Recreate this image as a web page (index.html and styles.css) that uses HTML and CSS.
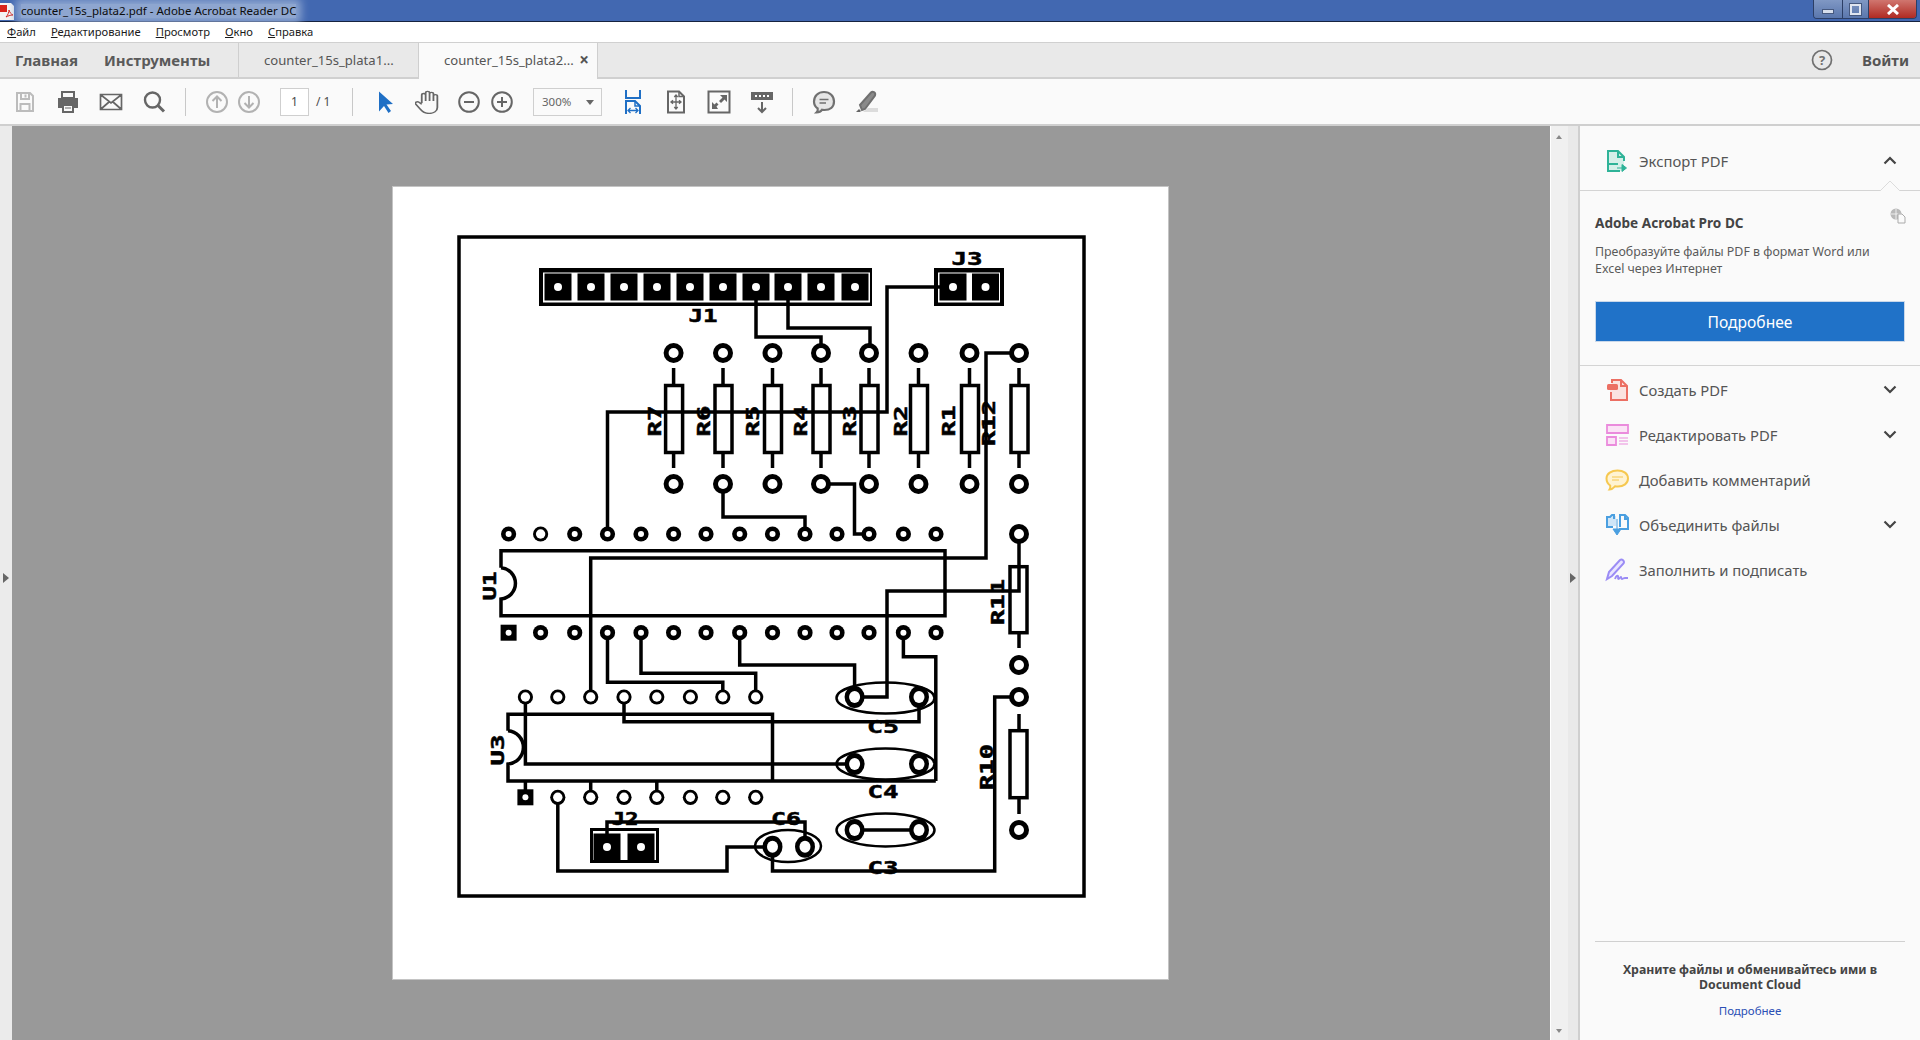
FILE: index.html
```html
<!DOCTYPE html>
<html lang="ru">
<head>
    <meta charset="UTF-8">
    <title>counter_15s_plata2.pdf - Adobe Acrobat Reader DC</title>
    <link rel="stylesheet" href="styles.css">
</head>
<body>

    <!-- заголовок окна -->
    <div class="titlebar">
        <svg class="app-icon" width="16" height="18" viewBox="0 0 16 18"><path d="M0 1h11l3 3v14H0z" fill="#f4f4f4"/><path d="M0 3h7v7H0z" fill="#d9241c"/><path d="M6 15c2-2 3-5 3-7 1 3 2 4 4 5-3 0-5 1-7 2z" fill="none" stroke="#d9241c"/></svg>
        <span class="title-text">counter_15s_plata2.pdf - Adobe Acrobat Reader DC</span>
        <div class="win-buttons">
            <div class="win-btn win-min"><span></span></div>
            <div class="win-btn win-max"><span></span></div>
            <div class="win-btn win-close">
                <svg width="14" height="11" viewBox="0 0 14 11"><path d="M2 1l10 9M12 1L2 10" stroke="#fff" stroke-width="3"/></svg>
            </div>
        </div>
    </div>

    <!-- меню -->
    <div class="menubar">
        <span><u>Ф</u>айл</span>
        <span><u>Р</u>едактирование</span>
        <span><u>П</u>росмотр</span>
        <span><u>О</u>кно</span>
        <span><u>С</u>правка</span>
    </div>

    <!-- вкладки -->
    <div class="tabbar">
        <div class="nav-tab tab-home">Главная</div>
        <div class="nav-tab tab-tools">Инструменты</div>
        <div class="doc-tab">counter_15s_plata1...</div>
        <div class="doc-tab active">counter_15s_plata2...<span class="tab-x">×</span></div>
        <div class="tab-right">
            <svg class="help-icon" width="22" height="22" viewBox="0 0 22 22"><circle cx="11" cy="11" r="9.5" fill="none" stroke="#707070" stroke-width="1.7"/><text x="11" y="15.5" class="help-q">?</text></svg>
            <span class="signin">Войти</span>
        </div>
    </div>

    <!-- панель инструментов -->
    <div class="toolbar">
        <div class="tool-group g-file">
            <svg class="tool" viewBox="0 0 24 24"><path d="M4 3h13l3 3v15H4z M8 3v6h8V3 M12.500 4.500v3 M7.500 21v-7h9v7" fill="none" stroke="#bcbcbc" stroke-width="2"/></svg>
            <svg class="tool" viewBox="0 0 24 24"><path d="M6 2h12v6H6z" fill="none" stroke="#666" stroke-width="2"/><path d="M2 8h20v10h-4v-4H6v4H2z" fill="#666"/><path d="M7 15h10v7H7z" fill="none" stroke="#666" stroke-width="2"/><path d="M9 18h6" stroke="#666"/></svg>
            <svg class="tool" viewBox="0 0 24 24"><path d="M1.500 4.500h21v15h-21z M2 5l10 8 10-8 M2 19l8-7 M22 19l-8-7" fill="none" stroke="#666" stroke-width="1.700"/></svg>
            <svg class="tool" viewBox="0 0 24 24"><circle cx="10.500" cy="10" r="7.500" fill="none" stroke="#666" stroke-width="2.400"/><path d="M16 15.500l6 6" stroke="#666" stroke-width="3"/></svg>
        </div>
        <div class="tool-sep sep-a"></div>
        <div class="tool-group g-nav">
            <svg class="tool" viewBox="0 0 24 24"><circle cx="12" cy="12" r="10" fill="none" stroke="#b2b2b2" stroke-width="2"/><path d="M12 18V7M7.500 11L12 6.500l4.500 4.500" fill="none" stroke="#b2b2b2" stroke-width="2"/></svg>
            <svg class="tool" viewBox="0 0 24 24"><circle cx="12" cy="12" r="10" fill="none" stroke="#b2b2b2" stroke-width="2"/><path d="M12 6v11M7.500 13l4.500 4.500 4.500-4.500" fill="none" stroke="#b2b2b2" stroke-width="2"/></svg>
        </div>
        <div class="page-box">1</div>
        <span class="page-total">/ 1</span>
        <div class="tool-sep sep-b"></div>
        <div class="tool-group g-select">
            <svg class="tool" viewBox="0 0 24 24"><path d="M6 1.500v20l5-5.500 4.500 7 2.500-2-4.500-6.500 6.500-.5z" fill="#1f6fc5"/></svg>
            <svg class="tool" viewBox="3 1 16 22" preserveAspectRatio="none"><path d="M7.500 13V5.500a1.300 1.300 0 0 1 2.600 0V11V3.500a1.300 1.300 0 0 1 2.600 0V11V4.500a1.300 1.300 0 0 1 2.600 0V11V6.500a1.300 1.300 0 0 1 2.600 0V17c0 3.500-2.500 5.500-5.500 5.500S8 21 6.500 18.500L3.500 14c-1-1.500 1-3 2.200-1.700L7.500 14" fill="none" stroke="#666" stroke-width="1.200"/></svg>
            <svg class="tool" viewBox="0 0 24 24"><circle cx="12" cy="12" r="9.800" fill="none" stroke="#666" stroke-width="2"/><path d="M7 12h10" stroke="#666" stroke-width="2"/></svg>
            <svg class="tool" viewBox="0 0 24 24"><circle cx="12" cy="12" r="9.800" fill="none" stroke="#666" stroke-width="2"/><path d="M7 12h10M12 7v10" stroke="#666" stroke-width="2"/></svg>
        </div>
        <div class="zoom-box">300%<span class="zoom-caret"></span></div>
        <div class="tool-group g-view">
            <svg class="tool" viewBox="0 0 24 24"><path d="M5 0v8h14V0" fill="none" stroke="#1f6fc5" stroke-width="2"/><path d="M5 24V11h9l5 5v8" fill="none" stroke="#1f6fc5" stroke-width="2"/><path d="M14 11v5h5" fill="none" stroke="#1f6fc5" stroke-width="1.500"/><path d="M7 20.500h10M9.500 18l-2.500 2.500 2.500 2.500M14.500 18l2.500 2.500-2.500 2.500" fill="none" stroke="#1f6fc5" stroke-width="1.300"/></svg>
            <svg class="tool" viewBox="0 0 24 24"><path d="M4 1.500h11l5 5v16H4z" fill="none" stroke="#666" stroke-width="2"/><path d="M15 1.500v5h5" fill="none" stroke="#666" stroke-width="1.500"/><path d="M12 5v14M7 12h10M10.300 7L12 5l1.700 2M10.300 17l1.700 2 1.700-2M9 10.300L7 12l2 1.700M15 10.300l2 1.700-2 1.700" fill="none" stroke="#666" stroke-width="1.300"/></svg>
            <svg class="tool" viewBox="0 0 24 24"><path d="M1.500 1.500h21v21h-21z" fill="none" stroke="#666" stroke-width="2"/><path d="M13 5h7v7l-2.500-2.500-3.500 3.500-2-2 3.500-3.500zM11 19H5v-7l2.500 2.500 2-2 2 2-2 2z" fill="#666"/></svg>
            <svg class="tool" viewBox="0 0 24 24"><path d="M1 2h22v8H1z" fill="#666"/><path d="M5 5h2v2H5zM9 5h2v2H9zM13 5h2v2h-2zM17 5h2v2h-2z" fill="#fff"/><path d="M12 12v10M8 18l4 4 4-4" fill="none" stroke="#666" stroke-width="2"/></svg>
        </div>
        <div class="tool-sep sep-c"></div>
        <div class="tool-group g-note">
            <svg class="tool" viewBox="0 0 24 24"><path d="M12 2c6 0 10 4 10 9.500S18 20 12.500 20c-1 0-2 0-2.500-.2C9 21.500 7 22.500 4.500 22.500c1-1 1.500-2.500 1.200-4C3.500 17 2 14.500 2 11.500 2 6 6 2 12 2z" fill="#e6e6e6" stroke="#707070" stroke-width="2.200"/><path d="M7.500 9.500h9M7.500 13h6.500" stroke="#707070" stroke-width="1.300"/></svg>
            <svg class="tool" viewBox="0 0 24 24"><path d="M1 22l3-3 2 2-1 1z" fill="#666"/><path d="M5 15L16 2.500c1.500-1.500 5-.5 4 3L10 19l-3 1z" fill="#8a8a8a" stroke="#707070" stroke-width="2"/><path d="M8 22h15v-4H13z" fill="#dcdcdc"/></svg>
        </div>
    </div>

    <div class="main">
        <div class="side-strip"><span class="tri tri-left"></span></div>

        <div class="viewer">
            <div class="pdf-page">
                <!-- плата: координаты как на экране -->
                <svg class="board" width="775" height="792" viewBox="393 187 775 792">
                    <defs>
                        <g id="hole"><circle r="10"/><circle r="5" fill="#fff"/></g>
                        <g id="pin"><circle r="7.600"/><circle r="3" fill="#fff"/></g>
                        <g id="ring"><circle r="7.600"/><circle r="4.700" fill="#fff"/></g>
                        <g id="pin-sq"><rect x="-8" y="-8" width="16" height="16"/><circle r="3" fill="#fff"/></g>
                        <g id="jp"><rect x="-13.500" y="-13.500" width="27" height="27"/><circle r="4" fill="#fff"/></g>
                        <g id="cp"><ellipse rx="10" ry="11"/><ellipse rx="5.500" ry="6" fill="#fff"/></g>
                        <g id="res" class="line"><rect x="-8" y="32.500" width="17" height="67"/><path d="M0 15v17.500M0 99.500V115"/></g>
                    </defs>

                    <rect class="line" x="459" y="237" width="625" height="659"/>

                    <!-- разъёмы -->
                    <rect x="539" y="268" width="333" height="38"/>
                    <rect x="543" y="272.500" width="327" height="30" fill="#fff"/>
                    <rect x="934" y="268" width="70" height="38"/>
                    <rect x="938" y="272.500" width="62" height="30" fill="#fff"/>
                    <rect x="590" y="828" width="69" height="35"/>
                    <rect x="593" y="831" width="63" height="29" fill="#fff"/>

                    <!-- дорожки -->
                    <path class="line" d="M756 287V337H821V353 M788 287V328H870V353 M953 287H887V412H607.500V534 M1019 353H986V558H590.700V697 M723 484V517H805V534 M821 484H854.500V534H869"/>
                    <path class="line" d="M1019 534V591H887V697H854.600 M1019 632V648 M1019 697H994.700V871H772.500V847 M525.400 697V764H854.600 M607.500 633V682.300H722.800V697 M641 633V673.300H755.700V697 M739.700 633V665H854.600V697 M903.400 633V656.700H935.800V781 M624 697V721.700H919V697 M854.600 830H919 M607 847V822H805V847 M557.800 797V871H727V847H772.500"/>
                    <path class="line" d="M525.400 781V797 M590.700 781V797 M656.800 781V797"/>

                    <!-- корпуса -->
                    <path class="line" d="M501 567.700V550.700H945V615.700H501V599A15.700 15.700 0 0 0 501 567.700"/>
                    <path class="line" d="M508 730.700V714.300H772.500V781H508V764A16.700 16.700 0 0 0 508 730.700 M772.500 781H935.800"/>
                    <rect class="line" x="1010" y="566.700" width="17" height="66"/>
                    <rect class="line" x="1010" y="730.700" width="17" height="67"/>
                    <path class="line" d="M1019 714V731 M1019 798V814"/>

                    <!-- резисторы -->
                    <use href="#res" x="673.600" y="353"/>
                    <use href="#res" x="723" y="353"/>
                    <use href="#res" x="772.500" y="353"/>
                    <use href="#res" x="821" y="353"/>
                    <use href="#res" x="869" y="353"/>
                    <use href="#res" x="918.500" y="353"/>
                    <use href="#res" x="969.500" y="353"/>
                    <use href="#res" x="1019" y="353"/>

                    <!-- конденсаторы -->
                    <ellipse class="thin" cx="885.500" cy="698" rx="49" ry="15.500"/>
                    <ellipse class="thin" cx="885.500" cy="764" rx="49" ry="15.500"/>
                    <ellipse class="thin" cx="885.500" cy="830" rx="49" ry="16.500"/>
                    <ellipse class="thin" cx="788" cy="846" rx="33" ry="16"/>

                    <!-- контактные площадки -->
                    <use href="#jp" x="558" y="287"/><use href="#jp" x="591" y="287"/><use href="#jp" x="624" y="287"/><use href="#jp" x="657" y="287"/><use href="#jp" x="690" y="287"/>
                    <use href="#jp" x="723" y="287"/><use href="#jp" x="756" y="287"/><use href="#jp" x="788" y="287"/><use href="#jp" x="821" y="287"/><use href="#jp" x="855" y="287"/>
                    <use href="#jp" x="953" y="287"/><use href="#jp" x="985.500" y="287"/>
                    <use href="#jp" x="607" y="847"/><use href="#jp" x="641" y="847"/>

                    <use href="#hole" x="673.600" y="353"/><use href="#hole" x="723" y="353"/><use href="#hole" x="772.500" y="353"/><use href="#hole" x="821" y="353"/>
                    <use href="#hole" x="869" y="353"/><use href="#hole" x="918.500" y="353"/><use href="#hole" x="969.500" y="353"/><use href="#hole" x="1019" y="353"/>
                    <use href="#hole" x="673.600" y="484"/><use href="#hole" x="723" y="484"/><use href="#hole" x="772.500" y="484"/><use href="#hole" x="821" y="484"/>
                    <use href="#hole" x="869" y="484"/><use href="#hole" x="918.500" y="484"/><use href="#hole" x="969.500" y="484"/><use href="#hole" x="1019" y="484"/>
                    <use href="#hole" x="1019" y="534"/><use href="#hole" x="1019" y="665"/><use href="#hole" x="1019" y="697"/><use href="#hole" x="1019" y="830"/>

                    <use href="#pin" x="508.600" y="534"/><use href="#ring" x="540.600" y="534"/><use href="#pin" x="574.700" y="534"/><use href="#pin" x="607.500" y="534"/><use href="#pin" x="641" y="534"/>
                    <use href="#pin" x="673.600" y="534"/><use href="#pin" x="706" y="534"/><use href="#pin" x="739.700" y="534"/><use href="#pin" x="772.500" y="534"/><use href="#pin" x="805" y="534"/>
                    <use href="#pin" x="837" y="534"/><use href="#pin" x="869" y="534"/><use href="#pin" x="903.400" y="534"/><use href="#pin" x="936" y="534"/>

                    <use href="#pin-sq" x="508.600" y="632.700"/><use href="#pin" x="540.600" y="632.700"/><use href="#pin" x="574.700" y="632.700"/><use href="#pin" x="607.500" y="632.700"/><use href="#pin" x="641" y="632.700"/>
                    <use href="#pin" x="673.600" y="632.700"/><use href="#pin" x="706" y="632.700"/><use href="#pin" x="739.700" y="632.700"/><use href="#pin" x="772.500" y="632.700"/><use href="#pin" x="805" y="632.700"/>
                    <use href="#pin" x="837" y="632.700"/><use href="#pin" x="869" y="632.700"/><use href="#pin" x="903.400" y="632.700"/><use href="#pin" x="936" y="632.700"/>

                    <use href="#ring" x="525.400" y="697"/><use href="#ring" x="557.800" y="697"/><use href="#ring" x="590.700" y="697"/><use href="#ring" x="624" y="697"/>
                    <use href="#ring" x="656.800" y="697"/><use href="#ring" x="690.400" y="697"/><use href="#ring" x="722.800" y="697"/><use href="#ring" x="755.700" y="697"/>

                    <use href="#pin-sq" x="525.400" y="797.300"/><use href="#ring" x="557.800" y="797.300"/><use href="#ring" x="590.700" y="797.300"/><use href="#ring" x="624" y="797.300"/>
                    <use href="#ring" x="656.800" y="797.300"/><use href="#ring" x="690.400" y="797.300"/><use href="#ring" x="722.800" y="797.300"/><use href="#ring" x="755.700" y="797.300"/>

                    <use href="#cp" x="854.600" y="697"/><use href="#cp" x="919" y="697"/>
                    <use href="#cp" x="854.600" y="764"/><use href="#cp" x="919" y="764"/>
                    <use href="#cp" x="854.600" y="830"/><use href="#cp" x="919" y="830"/>
                    <use href="#cp" x="772.500" y="846.700"/><use href="#cp" x="805" y="846.700"/>

                    <!-- обозначения -->
                    <text class="ref" transform="translate(703 316)" textLength="29" lengthAdjust="spacingAndGlyphs">J1</text>
                    <text class="ref" transform="translate(967 259)" textLength="31" lengthAdjust="spacingAndGlyphs">J3</text>
                    <text class="ref" transform="translate(625 819)" textLength="27" lengthAdjust="spacingAndGlyphs">J2</text>
                    <text class="ref" transform="translate(786 819)" textLength="30" lengthAdjust="spacingAndGlyphs">C6</text>
                    <text class="ref" transform="translate(883 727)" textLength="32" lengthAdjust="spacingAndGlyphs">C5</text>
                    <text class="ref" transform="translate(883 792)" textLength="31" lengthAdjust="spacingAndGlyphs">C4</text>
                    <text class="ref" transform="translate(883 868)" textLength="31" lengthAdjust="spacingAndGlyphs">C3</text>
                    <text class="ref" transform="translate(655 421) rotate(-90)" textLength="31" lengthAdjust="spacingAndGlyphs">R7</text>
                    <text class="ref" transform="translate(704 421) rotate(-90)" textLength="31" lengthAdjust="spacingAndGlyphs">R6</text>
                    <text class="ref" transform="translate(753 421) rotate(-90)" textLength="31" lengthAdjust="spacingAndGlyphs">R5</text>
                    <text class="ref" transform="translate(801 421) rotate(-90)" textLength="31" lengthAdjust="spacingAndGlyphs">R4</text>
                    <text class="ref" transform="translate(850 421) rotate(-90)" textLength="31" lengthAdjust="spacingAndGlyphs">R3</text>
                    <text class="ref" transform="translate(901 421) rotate(-90)" textLength="31" lengthAdjust="spacingAndGlyphs">R2</text>
                    <text class="ref" transform="translate(949 421) rotate(-90)" textLength="31" lengthAdjust="spacingAndGlyphs">R1</text>
                    <text class="ref" transform="translate(989 423) rotate(-90)" textLength="46" lengthAdjust="spacingAndGlyphs">R12</text>
                    <text class="ref" transform="translate(998 602) rotate(-90)" textLength="46" lengthAdjust="spacingAndGlyphs">R11</text>
                    <text class="ref" transform="translate(987 767) rotate(-90)" textLength="46" lengthAdjust="spacingAndGlyphs">R10</text>
                    <text class="ref" transform="translate(490 586) rotate(-90)" textLength="29" lengthAdjust="spacingAndGlyphs">U1</text>
                    <text class="ref" transform="translate(498 750) rotate(-90)" textLength="31" lengthAdjust="spacingAndGlyphs">U3</text>
                </svg>
            </div>
        </div>

        <div class="scrollbar">
            <span class="scroll-up"></span>
            <span class="scroll-down"></span>
        </div>
        <div class="panel-strip"><span class="tri tri-right"></span></div>

        <!-- правая панель -->
        <div class="panel">
            <div class="panel-head">
                <svg class="p-icon" viewBox="0 0 24 24"><path d="M3 2h10l6 6v14H3z" fill="#d6efe9"/><path d="M13 15H3V2h10l6 6v4M3 15v7h12M13 2v6h6" fill="none" stroke="#2fb398" stroke-width="2"/><path d="M12 19h7M17 15.500l4.500 3.500-4.500 3.500z" fill="#2fb398" stroke="#2fb398"/></svg>
                <span class="p-label">Экспорт PDF</span>
                <svg class="chev" viewBox="0 0 14 9"><path d="M1.500 7.500L7 2l5.500 5.500" fill="none" stroke="#444" stroke-width="2.200"/></svg>
                <span class="head-notch"></span>
            </div>
            <div class="promo">
                <svg class="cloud-doc" width="16" height="16" viewBox="0 0 16 16"><circle cx="6" cy="6" r="5.500" fill="#b9b9b9"/><path d="M1 6h10M6 1v10" stroke="#fafafa" stroke-width=".8"/><path d="M8 6h4l3 3v6H8z" fill="#fafafa" stroke="#aaa"/></svg>
                <div class="promo-title">Adobe Acrobat Pro DC</div>
                <div class="promo-text">Преобразуйте файлы PDF в формат Word или Excel через Интернет</div>
                <div class="promo-btn">Подробнее</div>
            </div>
            <div class="tool-list">
                <div class="tool-row">
                    <svg class="p-icon" viewBox="0 0 24 24"><path d="M5 12V22H22V8L16 2H7V5" fill="#fbe3e0"/><path d="M6 14v8h16V8l-6-6H7v3M16 2v6h6" fill="none" stroke="#ec6f63" stroke-width="2"/><rect x="2" y="6" width="11" height="6" rx="1.500" fill="#ec6f63"/></svg>
                    <span class="p-label">Создать PDF</span>
                    <svg class="chev" viewBox="0 0 14 9"><path d="M1.500 1.500L7 7l5.500-5.500" fill="none" stroke="#444" stroke-width="2.200"/></svg>
                </div>
                <div class="tool-row">
                    <svg class="p-icon" viewBox="0 0 24 24"><path d="M2 2h21v8H2zM2 14h9v8H2z" fill="#fbe3f6" stroke="#ea8bdc" stroke-width="1.800"/><path d="M14 15h9M14 18h9M14 21h9" stroke="#ea8bdc" stroke-width="1.200"/></svg>
                    <span class="p-label">Редактировать PDF</span>
                    <svg class="chev" viewBox="0 0 14 9"><path d="M1.500 1.500L7 7l5.500-5.500" fill="none" stroke="#444" stroke-width="2.200"/></svg>
                </div>
                <div class="tool-row">
                    <svg class="p-icon" viewBox="0 0 24 24"><path d="M12.500 2.500c6 0 10.500 3 10.500 8s-4.500 8-10 8c-1 0-2 0-3-.2C8.500 20 6.500 21.500 4.500 21.500c.7-1 1-2.500.7-4C3 16 1.500 13.500 1.500 10.500c0-5 5-8 11-8z" fill="#fff3d2" stroke="#f6c850" stroke-width="2"/><path d="M7 9h11M7 12h7" stroke="#f6c850" stroke-width="1.200"/></svg>
                    <span class="p-label">Добавить комментарий</span>
                </div>
                <div class="tool-row">
                    <svg class="p-icon" viewBox="0 0 24 24"><path d="M3 3h8v10H3z" fill="#cfe5f7"/><path d="M8 14H2V4h3l2-2h2v4M14 16h9V5l-3-3h-5v12M20 2v4h3" fill="none" stroke="#4a9fe0" stroke-width="2"/><path d="M12 6v11M8 16h8l-4 6z" fill="#4a9fe0" stroke="#4a9fe0"/></svg>
                    <span class="p-label">Объединить файлы</span>
                    <svg class="chev" viewBox="0 0 14 9"><path d="M1.500 1.500L7 7l5.500-5.500" fill="none" stroke="#444" stroke-width="2.200"/></svg>
                </div>
                <div class="tool-row">
                    <svg class="p-icon" viewBox="0 0 24 24"><path d="M2 21l2-7L15 2c2-1.500 5 1 3.500 3.500L7 18z" fill="#e9e5ff" stroke="#9b8cf5" stroke-width="2"/><path d="M10 21c1-3 2.500-4 3-3s-.5 3 .5 3 2-2.500 2.500-2 0 2 1 2 1.500-1 3-1h3" fill="none" stroke="#9b8cf5" stroke-width="1.800"/></svg>
                    <span class="p-label">Заполнить и подписать</span>
                </div>
            </div>
            <div class="panel-foot">
                <div class="foot-title">Храните файлы и обменивайтесь ими в Document Cloud</div>
                <div class="foot-link">Подробнее</div>
            </div>
        </div>
    </div>

</body>
</html>
```

FILE: styles.css
```css
/* общие */
* {
    box-sizing: border-box;
}

body {
    margin: 0;
    height: 100vh;
    overflow: hidden;
    display: flex;
    flex-direction: column;
    font-family: "Noto Sans", "Open Sans", sans-serif;
    color: #4b4b4b;
    background-color: #fafafa;
}

/* заголовок окна */
.titlebar {
    height: 22px;
    flex: none;
    display: flex;
    align-items: center;
    background-color: #4268b1;
    border-bottom: 1px solid #16233f;
}

.app-icon {
    flex: none;
    margin: 0 5px 0 0;
}

.title-text {
    font-size: 11.5px;
    color: #0c0c0c;
    background-color: #8ea6d0;
    box-shadow: 0 0 8px 5px #8ea6d0;
    line-height: 14px;
    white-space: nowrap;
}

.win-buttons {
    margin-left: auto;
    margin-right: 3px;
    height: 19px;
    align-self: flex-start;
    display: flex;
    border: 1px solid #2c3f66;
    border-top: none;
    border-radius: 0 0 4px 4px;
    overflow: hidden;
}

.win-btn {
    height: 100%;
    display: flex;
    align-items: center;
    justify-content: center;
    background: linear-gradient(#8098c4, #5a77ad);
    border-right: 1px solid #2c3f66;
}

.win-min {
    width: 29px;
}

.win-min span {
    width: 12px;
    height: 5px;
    margin-top: 4px;
    background-color: #d6deec;
    border: 1px solid #46597f;
}

.win-max {
    width: 26px;
}

.win-max span {
    width: 11px;
    height: 11px;
    border: 2px solid #dfe5f0;
    outline: 1px solid #46597f;
}

.win-close {
    width: 47px;
    border-right: none;
    background: linear-gradient(#d0766f, #b02a22);
}

/* меню */
.menubar {
    height: 20px;
    flex: none;
    display: flex;
    align-items: center;
    gap: 15px;
    padding: 0 0 2px 7px;
    background-color: #fff;
    font-size: 11.2px;
    color: #1a1a1a;
}

/* вкладки */
.tabbar {
    height: 37px;
    flex: none;
    display: flex;
    background-color: #e9e9e9;
    border-top: 1px solid #d0d0d0;
    border-bottom: 2px solid #d0d0d0;
}

.nav-tab {
    font-size: 15px;
    font-weight: bold;
    line-height: 35px;
    color: #5a5a5a;
}

.tab-home {
    margin-left: 15px;
    width: 89px;
}

.tab-tools {
    width: 134px;
}

.doc-tab {
    width: 180px;
    padding-left: 25px;
    border-left: 1px solid #cfcfcf;
    font-size: 13.1px;
    line-height: 34px;
    color: #555;
    white-space: nowrap;
}

.doc-tab.active {
    position: relative;
    height: 36px;
    background-color: #fafafa;
    border-right: 1px solid #cfcfcf;
}

.tab-x {
    position: absolute;
    right: 8px;
    top: 0;
    font-size: 17px;
    font-weight: bold;
    color: #555;
}

.tab-right {
    margin-left: auto;
    display: flex;
    align-items: center;
    padding-right: 11px;
}

.help-q {
    font-size: 13px;
    font-weight: bold;
    text-anchor: middle;
    fill: #707070;
}

.signin {
    margin-left: 29px;
    font-size: 15px;
    font-weight: bold;
    color: #555;
}

/* панель инструментов */
.toolbar {
    height: 47px;
    flex: none;
    display: flex;
    align-items: center;
    padding-left: 13px;
    background-color: #fafafa;
    border-bottom: 2px solid #cfcfcf;
}

.tool {
    width: 24px;
    height: 24px;
    flex: none;
}

.tool-group {
    display: flex;
    align-items: center;
}

.tool-sep {
    width: 1px;
    height: 28px;
    background-color: #c8c8c8;
}

.g-file {
    gap: 19px;
}

.sep-a {
    margin-left: 19px;
}

.g-nav {
    margin-left: 19px;
    gap: 8px;
}

.page-box {
    width: 29px;
    height: 28px;
    margin-left: 19px;
    border: 1px solid #cfcfcf;
    background-color: #fff;
    text-align: center;
    font-size: 12px;
    line-height: 26px;
}

.page-total {
    margin-left: 7px;
    width: 36px;
    font-size: 12px;
}

.g-select {
    margin-left: 20px;
    gap: 18px;
}

.g-select .tool:nth-child(4) {
    margin-left: -9px;
}

.zoom-box {
    position: relative;
    width: 69px;
    height: 28px;
    margin-left: 19px;
    padding-left: 8px;
    border: 1px solid #cfcfcf;
    font-size: 11.5px;
    line-height: 26px;
    color: #666;
}

.zoom-caret {
    position: absolute;
    right: 7px;
    top: 11px;
    border: 4px solid transparent;
    border-top: 5px solid #666;
}

.g-view {
    margin-left: 19px;
    gap: 19px;
}

.sep-c {
    margin-left: 18px;
}

.g-note {
    margin-left: 19px;
    gap: 19px;
}

/* основная область */
.main {
    flex: 1;
    min-height: 0;
    display: flex;
}

.side-strip {
    width: 12px;
    flex: none;
    display: flex;
    align-items: center;
    background-color: #ebebeb;
}

.tri {
    border: 5.5px solid transparent;
    border-left: 6px solid #666;
    border-right: none;
}

.tri-left {
    margin-left: 3px;
    margin-top: -10px;
}

.tri-right {
    margin-left: 2px;
    margin-top: -10px;
}

.viewer {
    flex: 1;
    min-width: 0;
    display: flex;
    justify-content: center;
    align-items: flex-start;
    padding: 60px 1px 0 0;
    background-color: #999;
}

.pdf-page {
    background-color: #fff;
    border: 1px solid #c4c4c4;
}

.board {
    display: block;
}

.line {
    fill: none;
    stroke: #000;
    stroke-width: 3.5;
}

.thin {
    fill: none;
    stroke: #000;
    stroke-width: 2.5;
}

.ref {
    font-family: "DejaVu Sans Mono", monospace;
    font-size: 17px;
    font-weight: bold;
    text-anchor: middle;
    dominant-baseline: central;
    fill: #000;
    stroke: #000;
    stroke-width: .5;
}

.scrollbar {
    width: 18px;
    flex: none;
    position: relative;
    background-color: #f0f0f0;
    border-left: 1px solid #fff;
}

.scroll-up,
.scroll-down {
    position: absolute;
    left: 5px;
    border: 3.5px solid transparent;
}

.scroll-up {
    top: 6px;
    border-bottom: 4px solid #888;
}

.scroll-down {
    bottom: 4px;
    border-top: 4px solid #888;
}

.panel-strip {
    width: 10px;
    flex: none;
    display: flex;
    align-items: center;
    background-color: #e9e9e9;
}

/* правая панель */
.panel {
    width: 342px;
    flex: none;
    display: flex;
    flex-direction: column;
    background-color: #fafafa;
    border-left: 2px solid #cfcfcf;
}

.panel-head {
    position: relative;
    height: 65px;
    flex: none;
    display: flex;
    align-items: center;
    padding: 5px 23px 0 25px;
    border-bottom: 1px solid #d4d4d4;
}

.head-notch {
    position: absolute;
    right: 20px;
    bottom: -1px;
    width: 20px;
    height: 10px;
    background: linear-gradient(135deg, transparent 49%, #d4d4d4 49%, #fafafa 54%) left / 50% 100% no-repeat,
                linear-gradient(225deg, transparent 49%, #d4d4d4 49%, #fafafa 54%) right / 50% 100% no-repeat;
}

.p-icon {
    width: 24px;
    height: 24px;
    flex: none;
}

.p-label {
    margin-left: 10px;
    font-size: 14.8px;
    color: #555;
}

.chev {
    width: 14px;
    height: 9px;
    margin-left: auto;
}

.promo {
    position: relative;
    height: 175px;
    flex: none;
    padding: 23px 15px 0 15px;
    border-bottom: 1px solid #d4d4d4;
}

.cloud-doc {
    position: absolute;
    right: 14px;
    top: 17px;
}

.promo-title {
    font-size: 13.6px;
    font-weight: bold;
    line-height: 18px;
    color: #444;
}

.promo-text {
    margin-top: 12px;
    padding-right: 20px;
    font-size: 12.4px;
    line-height: 16.500px;
    color: #5a5a5a;
}

.promo-btn {
    height: 41px;
    margin-top: 24px;
    text-align: center;
    font-size: 15.6px;
    line-height: 41px;
    color: #fff;
    background-color: #2072c8;
    border: 1px solid #c9d8ea;
}

.tool-list {
    padding: 1px 23px 0 25px;
}

.tool-row {
    height: 45px;
    display: flex;
    align-items: center;
}

.panel-foot {
    margin: auto 15px 0 15px;
    height: 99px;
    padding-top: 20px;
    border-top: 1px solid #d0d0d0;
    text-align: center;
}

.foot-title {
    padding: 0 10px;
    font-size: 12.3px;
    font-weight: bold;
    line-height: 15px;
    color: #444;
}

.foot-link {
    margin-top: 11px;
    font-size: 11.500px;
    color: #2b4fb5;
}
```
